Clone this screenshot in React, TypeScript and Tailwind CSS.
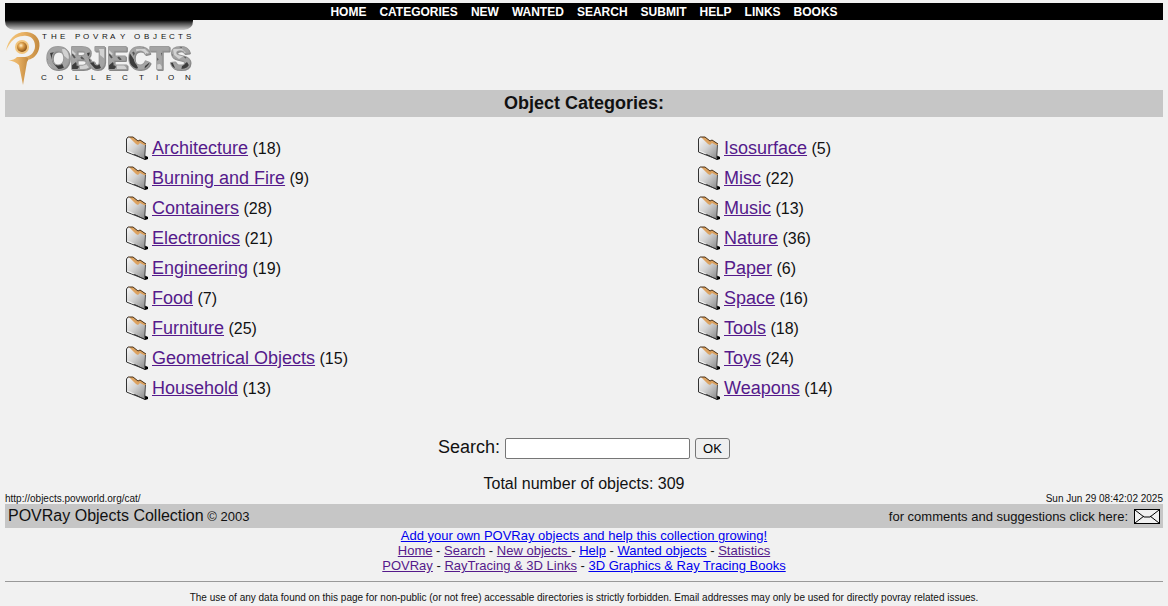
const NAV = ["HOME", "CATEGORIES", "NEW", "WANTED", "SEARCH", "SUBMIT", "HELP", "LINKS", "BOOKS"]

const LEFT = [
  { name: "Architecture", count: 18 },
  { name: "Burning and Fire", count: 9 },
  { name: "Containers", count: 28 },
  { name: "Electronics", count: 21 },
  { name: "Engineering", count: 19 },
  { name: "Food", count: 7 },
  { name: "Furniture", count: 25 },
  { name: "Geometrical Objects", count: 15 },
  { name: "Household", count: 13 },
]

const RIGHT = [
  { name: "Isosurface", count: 5 },
  { name: "Misc", count: 22 },
  { name: "Music", count: 13 },
  { name: "Nature", count: 36 },
  { name: "Paper", count: 6 },
  { name: "Space", count: 16 },
  { name: "Tools", count: 18 },
  { name: "Toys", count: 24 },
  { name: "Weapons", count: 14 },
]

function Logo() {
  return (
    <svg width="188" height="70" viewBox="0 0 188 70" role="img" aria-label="The POVRay Objects Collection" className="block">
      <defs>
        <linearGradient id="shade" x1="0" y1="0" x2="0" y2="1">
          <stop offset="0" stopColor="#000" />
          <stop offset="0.3" stopColor="#444" />
          <stop offset="1" stopColor="#d0d0d0" />
        </linearGradient>
        <linearGradient id="gold" x1="0" y1="0" x2="1" y2="0">
          <stop offset="0" stopColor="#f3c67c" />
          <stop offset="0.5" stopColor="#e9b265" />
          <stop offset="1" stopColor="#c38a40" />
        </linearGradient>
        <radialGradient id="ball" cx="0.4" cy="0.35" r="0.65">
          <stop offset="0" stopColor="#fff0cc" />
          <stop offset="0.4" stopColor="#dda04c" />
          <stop offset="1" stopColor="#8a5217" />
        </radialGradient>
        <pattern id="stone" width="37" height="29" patternUnits="userSpaceOnUse">
          <rect width="37" height="29" fill="#a4a4a4" />
          <path d="M8 4l5-1 6 9 3 7-4 3-7-8ZM29 17l5-4 3 5-4 5-5-1Z" fill="#3c3c3c" />
          <path d="M20 0h9l5 5-8 5-5-4ZM1 16l6-1 6 7-5 5-7-4Z" fill="#d2d2d2" />
          <path d="m2 8 3 3M30 5l3 4M3 23l5 3M24 25l5 2M17 3l2 4" stroke="#555" strokeWidth="2" />
        </pattern>
      </defs>
      <path d="M0 0h188v1q0 8-9 9H9Q0 9 0 1Z" fill="url(#shade)" />
      <path d="M1 31C3 18 12 11 22 12c10 1 14 9 12 17-2 7-7 11-13 11l-1-3c6-1 10-5 10-11 0-7-5-11-12-10C11 16 5 21 1 31Z" fill="url(#gold)" />
      <path d="M2 40q6 1 10-3h9q4 1 1 5l-4 23-4-20q-4-4-12-5Z" fill="url(#gold)" />
      <circle cx="17" cy="27" r="7" fill="#f1c47c" />
      <circle cx="17" cy="27" r="5" fill="url(#ball)" />
      <g fontFamily="'Liberation Sans', sans-serif" fill="#111" fontSize="8">
        <text y="19" x="37 46 55 62 70 78 88 97 105 115 122 129 139 148 156 164 173 181">THE POVRAY OBJECTS</text>
        <text y="60" x="36 52 70 86 101 117 134 151 163 180">COLLECTION</text>
      </g>
      <text
        x="41 65 84 102 123 145 165"
        y="49"
        fontFamily="'Liberation Sans', sans-serif"
        fontWeight="bold"
        fontSize="31"
        fill="url(#stone)"
        stroke="#9b9b9b"
        strokeWidth="2"
        strokeLinejoin="round"
        paintOrder="stroke"
        className="drop-shadow-[1px_1px_0_#888]"
      >
        OBJECTS
      </text>
    </svg>
  )
}

function FolderIcon() {
  return (
    <svg width="24" height="26" viewBox="0 0 24 26" className="shrink-0" aria-hidden="true">
      <defs>
        <linearGradient id="folder" x1="0" y1="0" x2="1" y2="1">
          <stop offset="0" stopColor="#fafafa" />
          <stop offset="0.45" stopColor="#d4d4d4" />
          <stop offset="1" stopColor="#858585" />
        </linearGradient>
      </defs>
      <path d="m8 19 12 6 3-1v-2l-4-2Z" fill="#000" />
      <path d="m1 4 2-2h5l5 4 2-1 6 4-1 15-3-1-11-6-5-2Z" fill="url(#folder)" />
      <path d="m4 2 4 0 5 4 2-1 6 4v2l-6-3-2 2-2-1-2-2Z" fill="#dca260" />
      <path d="m3 2 5 0 5 4 2-1 6 4" fill="none" stroke="#49331c" />
      <path d="M20.500 10l-1 13" stroke="#555" />
      <path d="M3 2 1.500 4v13l5 2 13 5" fill="none" stroke="#333" />
    </svg>
  )
}

function MailIcon() {
  return (
    <svg width="26" height="15" viewBox="0 0 26 15" aria-hidden="true">
      <rect x="0.500" y="0.500" width="25" height="14" fill="#f1f1f1" stroke="#000" />
      <path d="m1 1 9 7h6l9-7M1 14l9-7M25 14l-9-7" fill="none" stroke="#000" />
    </svg>
  )
}

function CategoryList({ items }: { items: { name: string; count: number }[] }) {
  return (
    <ul className="pl-[120px]">
      {items.map((c) => (
        <li key={c.name} className="flex h-[30px] items-center">
          <FolderIcon />
          <p className="ml-[3px]">
            <a href="#" className="text-lg text-[#551a8b] underline">{c.name}</a> ({c.count})
          </p>
        </li>
      ))}
    </ul>
  )
}

const VISITED = "text-[#551a8b] underline"
const FRESH = "text-[#0000ee] underline"

export default function App() {
  return (
    <div className="min-h-screen bg-[#f1f1f1] px-[5px] pt-[3px] font-['Liberation_Sans',Arial,sans-serif] text-base text-[#111]">
      <header>
        <nav className="flex h-[17px] items-center justify-center gap-[13px] bg-black text-xs font-bold text-white">
          {NAV.map((n) => (
            <a key={n} href="#">{n}</a>
          ))}
        </nav>
        <Logo />
      </header>

      <main>
        <h1 className="bg-[#c6c6c6] text-center text-lg leading-[27px] font-bold">Object Categories:</h1>
        <div className="grid grid-cols-2 pt-4 pr-[14px]">
          <CategoryList items={LEFT} />
          <CategoryList items={RIGHT} />
        </div>
        <form className="mt-8 flex items-end justify-center" onSubmit={(e) => e.preventDefault()}>
          <label htmlFor="search" className="mr-[5px] text-lg leading-6">Search:</label>
          <input id="search" type="text" className="h-[21px] w-[185px] rounded-[2px] border border-[#767676] bg-white px-1 text-[13px]" />
          <button type="submit" className="ml-[5px] h-[21px] w-[35px] rounded-[3px] border border-[#767676] bg-[#efefef] text-[13px] leading-[19px] text-black">OK</button>
        </form>
        <p className="mt-[15px] text-center leading-5">Total number of objects: 309</p>
      </main>

      <footer className="text-[13px] leading-[15px]">
        <div className="flex justify-between text-[10px] leading-[10px]">
          <span>http://objects.povworld.org/cat/</span>
          <span>Sun Jun 29 08:42:02 2025</span>
        </div>
        <div className="flex h-6 items-center justify-between bg-[#c6c6c6] px-[3px]">
          <p><span className="text-base">POVRay Objects Collection</span> © 2003</p>
          <a href="#" className="flex items-center gap-[6px]">for comments and suggestions click here: <MailIcon /></a>
        </div>
        <div className="text-center">
          <p><a href="#" className={FRESH}>Add your own POVRay objects and help this collection growing!</a></p>
          <p>
            <a href="#" className={VISITED}>Home</a> - <a href="#" className={VISITED}>Search</a> - <a href="#" className={VISITED}>New objects </a>- <a href="#" className={FRESH}>Help</a> - <a href="#" className={FRESH}>Wanted objects</a> - <a href="#" className={VISITED}>Statistics</a>
          </p>
          <p>
            <a href="#" className={VISITED}>POVRay</a> - <a href="#" className={VISITED}>RayTracing &amp; 3D Links</a> - <a href="#" className={FRESH}>3D Graphics &amp; Ray Tracing Books</a>
          </p>
        </div>
        <hr className="mt-2 border-[#999]" />
        <p className="pt-2 text-center text-[10px] leading-[15px]">The use of any data found on this page for non-public (or not free) accessable directories is strictly forbidden. Email addresses may only be used for directly povray related issues.</p>
      </footer>
    </div>
  )
}
